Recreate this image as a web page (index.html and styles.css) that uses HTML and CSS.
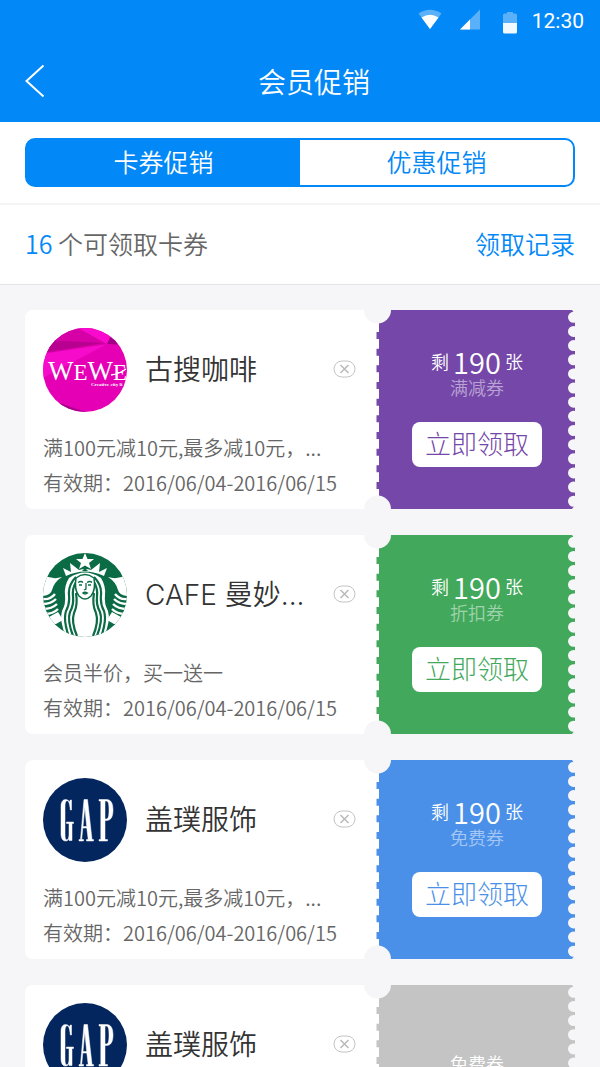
FILE: index.html
```html
<!DOCTYPE html>
<html lang="zh-CN">
<head>
<meta charset="utf-8">
<meta name="viewport" content="width=device-width, initial-scale=1">
<title>会员促销</title>
<link rel="stylesheet" href="styles.css">
</head>
<body>
<svg class="defs" aria-hidden="true">
  <symbol id="close" viewBox="0 0 24 18">
    <rect x="1" y="1" width="21" height="16" rx="8" fill="none" stroke="#c4c4c4"/>
    <path d="M7.500 5l8 8M15.500 5l-8 8" stroke="#b9b9b9" stroke-width="1.500" fill="none"/>
  </symbol>
  <symbol id="perforation" viewBox="0 0 28 199">
    <path d="M14 22V187" stroke="currentColor" stroke-width="3" stroke-dasharray="7 9.670" fill="none"/>
    <circle cx="13.500" cy="0" r="13.500" fill="#f6f6f8"/>
    <circle cx="13.500" cy="199" r="13.500" fill="#f6f6f8"/>
  </symbol>
  <symbol id="scallop" viewBox="0 0 8 199">
    <path d="M6.500 7.300V194" stroke="#f6f6f8" stroke-width="11" stroke-linecap="round" stroke-dasharray="0 14.150" fill="none"/>
    <path d="M5 0H8V4zM5 199H8V195z" fill="#f6f6f8"/>
  </symbol>
  <symbol id="logo-gap" viewBox="0 0 84 84">
    <circle cx="42" cy="42" r="42" fill="#04265f"/>
    <g fill="#fff" stroke="#fff" stroke-width=".500">
      <path d="M22.500 21.500c-3 0-4.500 3-4.500 7v27c0 4.500 1.500 7.500 4.500 7.500 2 0 3-1 3.500-3v2.500h3V45.500h1.500V44h-7v1.500H26V56c0 4-1 5.800-2.300 5.800-1.300 0-1.700-2-1.700-6V29c0-4 .500-6.300 2-6.300 1.800 0 2.800 3 3.300 9.300h1.200V22h-1.200l-.800 2c-.800-1.600-2-2.500-4-2.500z"/>
      <path d="M41 21.500h3.500L49 61.500h1.500V63h-7v-1.500h1.700L43.800 50h-4L38.700 61.500h1.800V63H36v-1.500h1.500zM41.800 29L40 48.500h3.700z"/>
      <path d="M56 21.500h7.500c4.500 0 6.500 4 6.500 10.500s-2 10.500-6.500 10.500H62v19h2.500V63H56v-1.500h1.800V23H56zM62 23v18h1.200c2.200 0 2.800-3 2.800-9s-.600-9-2.800-9z"/>
    </g>
  </symbol>
</svg>

<header class="header">
  <div class="status">
    <svg class="status-icons" viewBox="0 0 100 26" aria-hidden="true">
      <path d="M.500 5.500Q12 -2 23.500 5.500L12 21z" fill="#fff" opacity=".35"/>
      <path d="M3.500 9.500Q12 4 20.500 9.500L12 21z" fill="#fff"/>
      <path d="M42 21.500L62 1.500V21.500z" fill="#fff" opacity=".35"/>
      <path d="M42 21.500L52 11.500V21.500z" fill="#fff"/>
      <path d="M89 4h6v1.500h2.500q1.500 0 1.500 1.500V15H85V7q0-1.500 1.500-1.500H89z" fill="#fff" opacity=".35"/>
      <path d="M85 15h14v9q0 1.500-1.500 1.500h-11Q85 25.500 85 24z" fill="#fff" opacity=".95"/>
    </svg>
    <span class="clock">12:30</span>
  </div>
  <div class="titlebar">
    <button class="back" type="button" aria-label="返回">
      <svg viewBox="0 0 20 34" aria-hidden="true"><path d="M18.500 1.500L1.500 17l17 15.500" fill="none" stroke="#fff" stroke-width="2"/></svg>
    </button>
    <h1 class="title">会员促销</h1>
  </div>
</header>

<main>
  <div class="tabs-wrap">
    <nav class="tabs">
      <button class="tab tab-active" type="button">卡券促销</button>
      <button class="tab" type="button">优惠促销</button>
    </nav>
  </div>
  <div class="summary">
    <p class="count"><span class="accent">16</span> 个可领取卡券</p>
    <a class="accent" href="#">领取记录</a>
  </div>

  <section class="coupons">
    <article class="coupon purple">
      <div class="info">
        <div class="shop">
          <svg class="logo" viewBox="0 0 84 84" role="img" aria-label="WEWE">
            <clipPath id="round"><circle cx="42" cy="42" r="42"/></clipPath>
            <g clip-path="url(#round)">
              <path d="M0 0h84v84H0z" fill="#e500b5"/>
              <path d="M0 26L64 16 0 50z" fill="#f60bca"/>
              <path d="M0 0h50l14 16L0 25z" fill="#d500a6"/>
              <path d="M0 12l60 3L0 25z" fill="#b80091"/>
              <path d="M35 0h40L64 16z" fill="#fa0acd"/>
              <path d="M68 7l16 10-20-1z" fill="#a40087"/>
              <path d="M14 74l34 12H20z" fill="#a9008b"/>
            </g>
            <text class="wewe" x="5" y="52">W<tspan class="wewe-small">E</tspan>W<tspan class="wewe-small">E</tspan></text>
            <path d="M68 47q8-1 15-6" stroke="#fff" stroke-width="1.500" fill="none"/>
            <text class="wewe-tag" x="48" y="58">Creative city li</text>
          </svg>
          <h2 class="name">古搜咖啡</h2>
          <button class="close" type="button" aria-label="关闭"><svg aria-hidden="true"><use href="#close"/></svg></button>
        </div>
        <p class="detail">满100元减10元,最多减10元，...</p>
        <p class="detail">有效期：2016/06/04-2016/06/15</p>
      </div>
      <div class="stub">
        <svg class="perforation" aria-hidden="true"><use href="#perforation"/></svg>
        <svg class="scallop" aria-hidden="true"><use href="#scallop"/></svg>
        <p class="left">剩 <span class="amount">190</span> 张</p>
        <p class="kind">满减券</p>
        <button class="claim" type="button">立即领取</button>
      </div>
    </article>

    <article class="coupon green">
      <div class="info">
        <div class="shop">
          <svg class="logo" viewBox="0 0 84 84" role="img" aria-label="Starbucks">
            <clipPath id="round2"><circle cx="42" cy="42" r="42"/></clipPath>
            <g clip-path="url(#round2)">
              <path d="M0 0h84v84H0z" fill="#0b6b45"/>
              <g fill="#fff">
                <path d="M42 0l2.500 6h6.500l-5 4 2 6-6-3.500-6 3.500 2-6-5-4h6.500z"/>
                <path d="M23 23l-3-8 8 4-1-9 9 7q6-2 12 0l9-7-1 9 8-4-3 8q-19-9-38 0z"/>
                <path d="M0 22q10 5 19 2-8 5-10 13-1 5-9 6z"/>
                <path d="M84 22q-10 5-19 2 8 5 10 13 1 5 9 6z"/>
                <path d="M6 64l9-5 5 8-7 4-6 0z"/>
                <path d="M78 64l-9-5-5 8 7 4 6 0z"/>
                <path d="M26 25q16-11 32 0 5 8 4 17-1 9 3 16 3 9-4 26H23Q16 67 19 58q4-7 3-16-1-9 4-17z"/>
              </g>
              <path d="M42 15l3 3h-6z" fill="#0b6b45"/>
              <g fill="none" stroke="#fff" stroke-width="2.400">
                <path d="M0 46q7 1 12-5M0 51q8 0 13-5M0 56q9 0 14-5M2 61q8 0 13-5"/>
                <path d="M84 46q-7 1-12-5M84 51q-8 0-13-5M84 56q-9 0-14-5M82 61q-8 0-13-5"/>
              </g>
              <g fill="none" stroke="#0b6b45" stroke-width="2.200">
                <path d="M33 24q-8 8-7 18 1 9-3 16-3 9 3 26"/>
                <path d="M33 29q-4 7-3 14 1 9-3 16-3 8 3 24"/>
                <path d="M33 40q2 12-2 20-3 9 3 23"/>
                <path d="M51 24q8 8 7 18-1 9 3 16 3 9-3 26"/>
                <path d="M51 29q4 7 3 14-1 9 3 16 3 8-3 24"/>
                <path d="M51 40q-2 12 2 20 3 9-3 23"/>
              </g>
              <path d="M33 25q9-7 18 0 2 12-3 18-6 6-12 0-5-6-3-18z" fill="#fff" stroke="#0b6b45" stroke-width="1.500"/>
              <path d="M35 29.500q3-2 5 0M44 29.500q3-2 5 0M36 32h3M45 32h3M43 30v6l-2 1M39.500 40q2.500-1.500 5 0-2.500 2-5 0" fill="none" stroke="#0b6b45" stroke-width="1.300"/>
            </g>
          </svg>
          <h2 class="name">CAFE 曼妙...</h2>
          <button class="close" type="button" aria-label="关闭"><svg aria-hidden="true"><use href="#close"/></svg></button>
        </div>
        <p class="detail">会员半价，买一送一</p>
        <p class="detail">有效期：2016/06/04-2016/06/15</p>
      </div>
      <div class="stub">
        <svg class="perforation" aria-hidden="true"><use href="#perforation"/></svg>
        <svg class="scallop" aria-hidden="true"><use href="#scallop"/></svg>
        <p class="left">剩 <span class="amount">190</span> 张</p>
        <p class="kind">折扣券</p>
        <button class="claim" type="button">立即领取</button>
      </div>
    </article>

    <article class="coupon blue">
      <div class="info">
        <div class="shop">
          <svg class="logo" role="img" aria-label="GAP"><use href="#logo-gap"/></svg>
          <h2 class="name">盖璞服饰</h2>
          <button class="close" type="button" aria-label="关闭"><svg aria-hidden="true"><use href="#close"/></svg></button>
        </div>
        <p class="detail">满100元减10元,最多减10元，...</p>
        <p class="detail">有效期：2016/06/04-2016/06/15</p>
      </div>
      <div class="stub">
        <svg class="perforation" aria-hidden="true"><use href="#perforation"/></svg>
        <svg class="scallop" aria-hidden="true"><use href="#scallop"/></svg>
        <p class="left">剩 <span class="amount">190</span> 张</p>
        <p class="kind">免费券</p>
        <button class="claim" type="button">立即领取</button>
      </div>
    </article>

    <article class="coupon gray">
      <div class="info">
        <div class="shop">
          <svg class="logo" role="img" aria-label="GAP"><use href="#logo-gap"/></svg>
          <h2 class="name">盖璞服饰</h2>
          <button class="close" type="button" aria-label="关闭"><svg aria-hidden="true"><use href="#close"/></svg></button>
        </div>
      </div>
      <div class="stub">
        <svg class="perforation" aria-hidden="true"><use href="#perforation"/></svg>
        <svg class="scallop" aria-hidden="true"><use href="#scallop"/></svg>
        <p class="kind">免费券</p>
      </div>
    </article>
  </section>
</main>
</body>
</html>
```

FILE: styles.css
```css
* {
  box-sizing: border-box;
}

html {
  height: 100%;
  overflow: hidden;
}

body {
  margin: 0;
  height: 100%;
  overflow: hidden;
  background: #f6f6f8;
  color: #666;
  font-family: "Noto Sans CJK SC", sans-serif;
  font-weight: 350;
}

h1, h2, p {
  margin: 0;
  font-weight: 350;
}

button {
  margin: 0;
  padding: 0;
  border: 0;
  background: none;
  font: inherit;
  cursor: pointer;
}

svg {
  display: block;
}

.defs {
  position: absolute;
  width: 0;
  height: 0;
}

.header {
  background: #0288f7;
  color: #fff;
}

.status {
  display: flex;
  justify-content: flex-end;
  align-items: center;
  gap: 14px;
  height: 42px;
  padding-right: 16px;
}

.status-icons {
  width: 100px;
  height: 26px;
}

.clock {
  font: 400 21px/42px Roboto, sans-serif;
}

.titlebar {
  display: grid;
  grid-template-columns: 48px 1fr 20px;
  align-items: center;
  height: 80px;
  padding: 0 25px 2px;
}

.back svg {
  width: 20px;
  height: 34px;
}

.title {
  font-size: 28px;
  line-height: 40px;
  text-align: center;
}

.tabs-wrap {
  padding: 16px 25px;
  background: #fff;
  border-bottom: 2px solid #f5f5f6;
}

.tabs {
  display: grid;
  grid-template-columns: 1fr 1fr;
  border: 2px solid #0288f7;
  border-radius: 10px;
  background: linear-gradient(90deg, #0288f7 50%, #fff 50%);
}

.tab {
  height: 45px;
  padding-bottom: 3px;
  color: #0288f7;
  font-size: 25px;
  line-height: 42px;
}

.tab-active {
  color: #fff;
}

.summary {
  display: flex;
  justify-content: space-between;
  align-items: center;
  height: 80px;
  padding: 0 25px 4px;
  background: #fff;
  border-bottom: 1px solid #e4e4e6;
  font-size: 25px;
  line-height: 36px;
}

.accent {
  color: #0288f7;
  text-decoration: none;
}

.coupons {
  display: grid;
  gap: 26px;
  padding: 25px;
}

.coupon {
  display: grid;
  grid-template-columns: 1fr 196px;
  height: 199px;
}

.purple { --tone: #7447a8; }
.green { --tone: #42a85b; }
.blue { --tone: #4a90e8; }
.gray { --tone: #c4c4c4; }

.info {
  padding: 18px 18px 8px;
  background: #fff;
  border-radius: 8px 0 0 8px;
}

.shop {
  display: flex;
  align-items: center;
  gap: 18px;
  margin-bottom: 18px;
}

.logo {
  flex: none;
  width: 84px;
  height: 84px;
}

.wewe {
  fill: #fff;
  font: 27px "Liberation Serif", serif;
}

.wewe-small {
  font-size: 23px;
}

.wewe-tag {
  fill: #fff;
  font: bold 5px "Liberation Serif", serif;
}

.name {
  flex: 1;
  color: #333;
  font-family: Inter, "Noto Sans CJK SC", sans-serif;
  font-size: 28px;
  line-height: 40px;
}

.close {
  margin: 0 4px 3px 0;
}

.close svg {
  width: 24px;
  height: 18px;
}

.detail {
  font-size: 20px;
  line-height: 35px;
  white-space: nowrap;
}

.stub {
  position: relative;
  display: flex;
  flex-direction: column;
  align-items: center;
  padding-top: 37px;
  background: var(--tone);
  color: #fff;
  text-align: center;
}

.perforation {
  position: absolute;
  top: 0;
  left: -15px;
  width: 28px;
  height: 199px;
  color: var(--tone);
}

.scallop {
  position: absolute;
  top: 0;
  right: 0;
  width: 8px;
  height: 199px;
}

.left {
  display: flex;
  align-items: center;
  gap: 4px;
  height: 29px;
  font-size: 18px;
  line-height: 29px;
}

.amount {
  font-size: 29px;
}

.kind {
  color: rgba(255, 255, 255, 0.5);
  font-size: 18px;
  line-height: 22px;
}

.claim {
  width: 130px;
  height: 45px;
  margin-top: 24px;
  padding-bottom: 3px;
  border-radius: 8px;
  background: #fff;
  color: var(--tone);
  font-size: 26px;
  font-weight: 300;
  line-height: 42px;
}

.gray .stub {
  padding-top: 67px;
}

.gray .kind {
  color: #fff;
}
```
